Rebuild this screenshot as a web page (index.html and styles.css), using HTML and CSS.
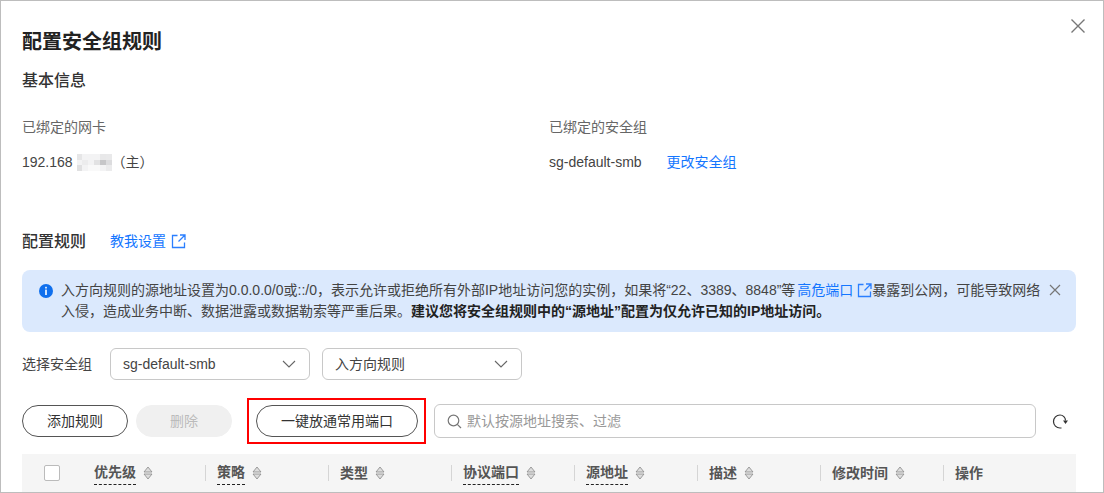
FILE: index.html
```html
<!DOCTYPE html>
<html lang="zh-CN">
<head>
<meta charset="utf-8">
<title>配置安全组规则</title>
<link rel="stylesheet" href="styles.css">
</head>
<body>
<div class="modal">
  <button class="close" aria-label="关闭"><svg width="16" height="16" viewBox="0 0 16 16"><path d="M1.5 1.5l13 13M14.5 1.5l-13 13" stroke="#777" stroke-width="1.4" fill="none"/></svg></button>
  <h1 class="title">配置安全组规则</h1>
  <h2 class="section">基本信息</h2>
  <div class="info">
    <div class="info-col">
      <div class="label">已绑定的网卡</div>
      <div class="value">192.168<svg class="mosaic" width="35" height="17" viewBox="0 0 35 17"><rect width="35" height="17" fill="#f3f3f4"/><rect x="0" y="0" width="5" height="6" fill="#e6e6e7"/><rect x="0" y="11" width="5" height="6" fill="#e0e0e1"/><rect x="5" y="6" width="6" height="5" fill="#ececed"/><rect x="17" y="6" width="6" height="5" fill="#e2e2e3"/><rect x="23" y="0" width="6" height="6" fill="#e8e8e9"/><rect x="23" y="6" width="6" height="5" fill="#c6c6c8"/><rect x="29" y="6" width="6" height="5" fill="#dcdcde"/><rect x="11" y="11" width="12" height="6" fill="#f9f9f9"/><rect x="29" y="0" width="6" height="6" fill="#e9e9ea"/><rect x="29" y="11" width="6" height="6" fill="#ebebec"/></svg><span class="main-tag">（主）</span></div>
    </div>
    <div class="info-col">
      <div class="label">已绑定的安全组</div>
      <div class="value">sg-default-smb<a class="link change" href="#">更改安全组</a></div>
    </div>
  </div>
  <div class="rules-head">
    <h2 class="section rules-title">配置规则</h2>
    <a class="link teach" href="#"><span class="teach-text">教我设置</span><svg class="ext" width="15" height="15" viewBox="0 0 15 15"><path d="M6.500 1.500H1.500v12h12V8.500M7.500 7.500l6-6M9 1h5v5" stroke="#2b7fff" stroke-width="1.300" fill="none"/></svg></a>
  </div>
  <div class="alert">
    <svg class="alert-icon" width="14" height="14" viewBox="0 0 14 14"><circle cx="7" cy="7" r="7" fill="#0f6fed"/><rect x="6.200" y="2.800" width="1.600" height="1.700" fill="#fff"/><rect x="6.200" y="5.600" width="1.600" height="5.400" fill="#fff"/></svg>
    <p class="alert-text">入方向规则的源地址设置为0.0.0.0/0或::/0，表示允许或拒绝所有外部IP地址访问您的实例，如果将“22、3389、8848”等<a class="link risk" href="#">高危端口<svg class="ext-inline" width="15" height="15" viewBox="0 0 15 15"><path d="M6.500 1.500H1.500v12h12V8.500M7.500 7.500l6-6M9 1h5v5" stroke="#2b7fff" stroke-width="1.300" fill="none"/></svg></a>暴露到公网，可能导致网络入侵，造成业务中断、数据泄露或数据勒索等严重后果。<b>建议您将安全组规则中的“源地址”配置为仅允许已知的IP地址访问。</b></p>
    <svg class="alert-close" width="12" height="12" viewBox="0 0 12 12"><path d="M1 1l10 10M11 1L1 11" stroke="#777" stroke-width="1.200" fill="none"/></svg>
  </div>
  <div class="select-row">
    <span class="select-label">选择安全组</span>
    <div class="select"><span>sg-default-smb</span><svg width="14" height="8" viewBox="0 0 14 8"><path d="M1 1l6 6 6-6" stroke="#666" stroke-width="1.100" fill="none"/></svg></div>
    <div class="select"><span class="cjk-up">入方向规则</span><svg width="14" height="8" viewBox="0 0 14 8"><path d="M1 1l6 6 6-6" stroke="#666" stroke-width="1.100" fill="none"/></svg></div>
  </div>
  <div class="toolbar">
    <button class="btn add">添加规则</button>
    <button class="btn del">删除</button>
    <div class="highlight"><button class="btn open">一键放通常用端口</button></div>
    <div class="search"><svg width="15" height="15" viewBox="0 0 15 15"><circle cx="6.500" cy="6.500" r="5.300" stroke="#777" stroke-width="1.200" fill="none"/><path d="M10.300 10.300l3.700 3.700" stroke="#777" stroke-width="1.200"/></svg><span class="cjk-up">默认按源地址搜索、过滤</span></div>
    <svg class="refresh" width="18" height="18" viewBox="0 0 18 18"><path d="M13.500 7.500C13.500 4.500 11 2 8 2a6.500 6.500 0 0 0 0 13h1.500" stroke="#333" stroke-width="1.200" fill="none"/><path d="M11 7.500h5L13.500 11z" fill="#333"/></svg>
  </div>
  <div class="thead">
    <div class="check-cell"><span class="checkbox"></span></div>
    <div class="th first"><span class="dashed">优先级</span><svg class="sort" width="10" height="14" viewBox="0 0 10 14"><path d="M5 1l4 5H1zM5 13L1 8h8z" fill="#ddd" stroke="#888" stroke-width=".8"/></svg></div>
    <div class="th"><span class="dashed">策略</span><svg class="sort" width="10" height="14" viewBox="0 0 10 14"><path d="M5 1l4 5H1zM5 13L1 8h8z" fill="#ddd" stroke="#888" stroke-width=".8"/></svg></div>
    <div class="th"><span class="plain">类型</span><svg class="sort" width="10" height="14" viewBox="0 0 10 14"><path d="M5 1l4 5H1zM5 13L1 8h8z" fill="#ddd" stroke="#888" stroke-width=".8"/></svg></div>
    <div class="th"><span class="dashed">协议端口</span><svg class="sort" width="10" height="14" viewBox="0 0 10 14"><path d="M5 1l4 5H1zM5 13L1 8h8z" fill="#ddd" stroke="#888" stroke-width=".8"/></svg></div>
    <div class="th"><span class="dashed">源地址</span><svg class="sort" width="10" height="14" viewBox="0 0 10 14"><path d="M5 1l4 5H1zM5 13L1 8h8z" fill="#ddd" stroke="#888" stroke-width=".8"/></svg></div>
    <div class="th"><span class="plain">描述</span><svg class="sort" width="10" height="14" viewBox="0 0 10 14"><path d="M5 1l4 5H1zM5 13L1 8h8z" fill="#ddd" stroke="#888" stroke-width=".8"/></svg></div>
    <div class="th"><span class="plain">修改时间</span><svg class="sort" width="10" height="14" viewBox="0 0 10 14"><path d="M5 1l4 5H1zM5 13L1 8h8z" fill="#ddd" stroke="#888" stroke-width=".8"/></svg></div>
    <div class="th"><span class="plain">操作</span></div>
  </div>
</div>
</body>
</html>
```
FILE: styles.css
```css
* { box-sizing: border-box; }
html, body { margin: 0; padding: 0; height: 100%; background: #fff; overflow: hidden; }
body { font-family: "Liberation Sans", "Noto Sans CJK SC", sans-serif; font-size: 14px; color: #333; }
.modal { position: relative; width: 1104px; height: 493px; border: 1px solid #bdbdbd; padding: 28px 27px 0 21px; overflow: hidden; }
.close { position: absolute; top: 17px; right: 17px; width: 16px; height: 16px; padding: 0; border: 0; background: none; display: flex; }
.title { margin: 0; font-size: 20px; line-height: 26px; font-weight: 700; color: #222; }
.section { margin: 0; font-size: 16px; line-height: 24px; font-weight: 500; color: #333; }
.title + .section { margin-top: 14px; }
.info { display: flex; margin-top: 24px; }
.info-col { width: 527px; }
.label { line-height: 20px; color: #666; }
.value { margin-top: 15px; line-height: 20px; color: #444; display: flex; align-items: center; }
.mosaic { margin-left: 4px; }
.main-tag { margin-left: 0; }
.link { color: #1476ff; text-decoration: none; }
.change { margin-left: 25px; }
.rules-head { display: flex; align-items: center; margin-top: 57px; height: 24px; }
.rules-title { padding-top: 2px; }
.teach { margin-left: 24px; display: flex; align-items: center; }
.teach-text { padding-bottom: 2px; }
.ext { margin-left: 5px; }
.risk { margin-left: 2px; }
.ext-inline { margin-left: 4px; vertical-align: -3px; }
.alert { position: relative; display: flex; margin-top: 17px; height: 62px; width: 1054px; padding: 10px 17px; background: #dbe9fd; border-radius: 8px; }
.alert-icon { flex: none; margin-top: 4px; }
.alert-text { margin: 0 0 0 8px; width: 985px; line-height: 21px; color: #444; }
.alert-text b { color: #222; }
.alert-close { position: absolute; top: 14px; right: 15px; }
.select-row { display: flex; align-items: center; margin-top: 16px; height: 32px; }
.select-label { width: 88px; color: #444; padding-bottom: 2px; }
.select { display: flex; align-items: center; justify-content: space-between; width: 200px; height: 32px; margin-right: 12px; padding: 0 13px 0 12px; border: 1px solid #c8c8c8; border-radius: 6px; color: #444; }
.cjk-up { padding-bottom: 2px; }
.toolbar { display: flex; align-items: center; margin-top: 24px; height: 34px; }
.btn { height: 32px; padding: 0 0 2px; border: 1px solid #555; border-radius: 16px; background: #fff; font: inherit; color: #333; }
.add { width: 106px; }
.del { width: 96px; margin-left: 8px; border-color: #f0f0f0; background: #f0f0f0; color: #bbb; }
.highlight { display: flex; margin-left: 15px; padding: 5px 6px 5px 7px; border: 2px solid #f00; height: 46px; flex: none; }
.open { width: 162px; }
.search { display: flex; align-items: center; width: 602px; height: 34px; margin-left: 8px; padding-left: 12px; border: 1px solid #c8c8c8; border-radius: 6px; color: #999; }
.search span { margin-left: 5px; }
.refresh { margin-left: 16px; margin-top: 1px; }
.thead { display: grid; grid-template-columns: 72px 111px repeat(6, 123px) 1fr; align-items: center; width: 1054px; height: 38px; margin-top: 16px; background: #f5f5f5; }
.check-cell { padding-left: 22px; display: flex; }
.checkbox { width: 16px; height: 16px; background: #fff; border: 1px solid #bbb; border-radius: 2px; }
.th { display: flex; align-items: center; height: 16px; padding-left: 11px; border-left: 1px solid #d5d5d5; font-weight: 700; color: #555; }
.th.first { padding-left: 0; border-left: 0; }
.plain { padding-bottom: 2px; }
.dashed { line-height: 16px; border-bottom: 1px dashed #222; padding-bottom: 4px; margin-top: 3px; }
.sort { margin-left: 7px; }
```
